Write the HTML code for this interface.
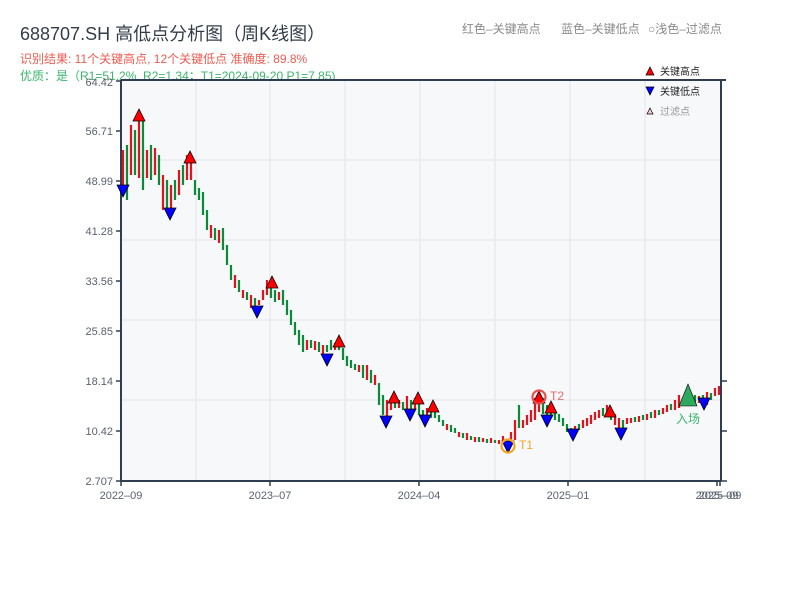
<!DOCTYPE html>
<html><head><meta charset="utf-8"><style>
body{margin:0;background:#fff;width:800px;height:600px;overflow:hidden;font-family:"Liberation Sans","Noto Sans CJK SC",sans-serif}
svg{position:absolute;left:0;top:0}
</style></head><body>
<svg width="800" height="600" xmlns="http://www.w3.org/2000/svg" font-family="Liberation Sans, Noto Sans CJK SC, sans-serif">
<text x="20" y="40" font-size="18" fill="#333d4a">688707.SH 高低点分析图（周K线图）</text>
<text x="20" y="63" font-size="12" fill="#f05b50">识别结果: 11个关键高点, 12个关键低点  准确度: 89.8%</text>
<text x="20" y="80" font-size="12" fill="#3bb56b">优质：是（R1=51.2%, R2=1.34；T1=2024-09-20 P1=7.85)</text>
<text x="462" y="33" font-size="12" fill="#8a8a8a">红色–关键高点</text>
<text x="561" y="33" font-size="12" fill="#8a8a8a">蓝色–关键低点</text>
<text x="648" y="33" font-size="12" fill="#8a8a8a">○浅色–过滤点</text>
<rect x="121" y="80" width="600" height="401" fill="#f6f8fa"/>
<g stroke="#e1e4ea" stroke-width="1">
<line x1="196" y1="80" x2="196" y2="480"/><line x1="270" y1="80" x2="270" y2="480"/><line x1="345" y1="80" x2="345" y2="480"/><line x1="420" y1="80" x2="420" y2="480"/><line x1="495" y1="80" x2="495" y2="480"/><line x1="570" y1="80" x2="570" y2="480"/><line x1="645" y1="80" x2="645" y2="480"/>
<line x1="121" y1="160" x2="721" y2="160"/><line x1="121" y1="240" x2="721" y2="240"/><line x1="121" y1="320" x2="721" y2="320"/><line x1="121" y1="400" x2="721" y2="400"/>
</g>
<path stroke="#e0141e" stroke-width="2.2" fill="none" d="M123 150V185M131 125V175M139 120V178M147 150V178M155 148V175M163 175V210M171 185V210M179 170V195M187 155V180M191 160V180M211 225V238M219 230V243M235 275V288M243 290V298M251 295V308M259 300V305M263 290V300M267 280V295M279 292V300M307 340V350M315 341V350M323 345V355M335 343V350M359 365V372M367 365V380M375 375V385M387 400V420M391 398V410M399 400V408M407 396V410M415 398V410M427 408V416M447 424V430M459 432V437M467 433V440M475 437V442M483 438V442M491 438V443M499 440V444M503 436V444M511 432V442M515 420V440M523 420V428M527 415V425M531 410V422M535 398V420M539 392V412M575 426V432M583 420V428M587 418V426M591 415V424M595 412V420M599 410V418M607 405V416M615 414V425M619 418V430M627 418V424M631 418V423M639 416V422M647 414V420M655 410V418M663 408V414M667 405V412M675 400V410M679 395V408M687 392V404M691 394V404M699 396V403M707 392V405M715 388V396M719 386V395"/>
<path stroke="#0b8a3a" stroke-width="2.2" fill="none" d="M127 145V200M135 130V175M143 120V190M151 145V180M159 155V185M167 180V212M175 180V200M183 165V185M195 180V195M199 188V200M203 192V215M207 210V230M215 228V240M223 228V250M227 245V265M231 265V280M239 280V292M247 292V300M255 298V312M271 285V298M275 290V302M283 290V305M287 300V315M291 310V325M295 322V335M299 330V345M303 335V352M311 340V348M319 342V352M327 345V352M331 340V350M339 340V350M343 348V360M347 356V366M351 360V368M355 364V370M363 365V378M371 370V383M379 383V405M383 395V415M395 400V408M403 402V410M411 400V412M419 400V415M423 410V418M431 408V418M435 410V418M439 415V422M443 420V426M451 425V432M455 428V433M463 433V438M471 436V440M479 437V442M487 439V443M495 440V443M507 440V444M519 405V428M543 398V414M547 405V415M551 408V418M555 412V420M559 414V422M563 418V426M567 424V432M571 428V436M579 424V430M603 408V416M611 410V420M623 420V428M635 417V422M643 415V420M651 412V418M659 410V415M671 404V410M683 398V405M695 395V403M703 395V402M711 393V400"/>
<g stroke="#2e3e50" stroke-width="2" fill="none">
<line x1="121" y1="80" x2="121" y2="481"/><line x1="120" y1="481" x2="721" y2="481"/><line x1="121" y1="80" x2="726" y2="80"/><line x1="721" y1="80" x2="721" y2="481"/>
</g>
<g stroke="#2e3e50" stroke-width="1.5">
<line x1="116" y1="81" x2="121" y2="81"/><line x1="116" y1="131" x2="121" y2="131"/><line x1="116" y1="181" x2="121" y2="181"/><line x1="116" y1="231" x2="121" y2="231"/><line x1="116" y1="281" x2="121" y2="281"/><line x1="116" y1="331" x2="121" y2="331"/><line x1="116" y1="381" x2="121" y2="381"/><line x1="116" y1="431" x2="121" y2="431"/><line x1="116" y1="481" x2="121" y2="481"/>
<line x1="721" y1="381" x2="727" y2="381"/><line x1="721" y1="431" x2="727" y2="431"/><line x1="721" y1="481" x2="727" y2="481"/>
<line x1="121" y1="481" x2="121" y2="486"/><line x1="270" y1="481" x2="270" y2="486"/><line x1="419" y1="481" x2="419" y2="486"/><line x1="568" y1="481" x2="568" y2="486"/><line x1="717" y1="481" x2="717" y2="486"/><line x1="720" y1="481" x2="720" y2="486"/>
</g>
<g font-size="11" fill="#5a6270" text-anchor="end">
<text x="113" y="86">64.42</text><text x="113" y="135">56.71</text><text x="113" y="185">48.99</text><text x="113" y="235">41.28</text><text x="113" y="285">33.56</text><text x="113" y="335">25.85</text><text x="113" y="385">18.14</text><text x="113" y="435">10.42</text><text x="113" y="485">2.707</text>
</g>
<g font-size="11" fill="#5a6270" text-anchor="middle">
<text x="121" y="499">2022–09</text><text x="270" y="499">2023–07</text><text x="419" y="499">2024–04</text><text x="568" y="499">2025–01</text><text x="717" y="499">2025–09</text><text x="720" y="499">2025–09</text>
</g>
<g stroke="#000" stroke-width="0.8" fill="#f00">
<polygon points="133,121 139,109 145,121"/><polygon points="184,163 190,151 196,163"/><polygon points="266,288 272,276 278,288"/><polygon points="333,347 339,335 345,347"/><polygon points="388,403 394,391 400,403"/><polygon points="412,404 418,392 424,404"/><polygon points="427,412 433,400 439,412"/><polygon points="533,403 539,391 545,403"/><polygon points="545,413 551,401 557,413"/><polygon points="604,417 610,405 616,417"/>
</g>
<g stroke="#000" stroke-width="0.8" fill="#00f">
<polygon points="117,185 123,197 129,185"/><polygon points="164,208 170,220 176,208"/><polygon points="251,306 257,318 263,306"/><polygon points="321,354 327,366 333,354"/><polygon points="380,416 386,428 392,416"/><polygon points="404,409 410,421 416,409"/><polygon points="419,415 425,427 431,415"/><polygon points="502,441 508,453 514,441"/><polygon points="541,415 547,427 553,415"/><polygon points="567,429 573,441 579,429"/><polygon points="615,428 621,440 627,428"/><polygon points="698,398 704,410 710,398"/>
</g>
<polygon points="679,406 688,384 697,406" fill="#2eaa5e" stroke="#000" stroke-width="0.6"/>
<circle cx="508" cy="446" r="6.5" fill="none" stroke="#f5a623" stroke-width="2.2"/>
<text x="519" y="449" font-size="12" fill="#f5a623">T1</text>
<circle cx="539" cy="397" r="6.5" fill="none" stroke="#e55050" stroke-width="2.2"/>
<text x="550" y="400" font-size="12" fill="#e56b6b">T2</text>
<text x="676" y="423" font-size="12" fill="#3bb56b">入场</text>
<polygon points="646,75 650,67 654,75" fill="#f00" stroke="#000" stroke-width="0.7"/>
<text x="660" y="75" font-size="10" fill="#222">关键高点</text>
<polygon points="646,87 654,87 650,95" fill="#00f" stroke="#000" stroke-width="0.7"/>
<text x="660" y="95" font-size="10" fill="#222">关键低点</text>
<polygon points="647,114 650,108 653,114" fill="#fcc" stroke="#000" stroke-width="0.7"/>
<text x="660" y="115" font-size="10" fill="#999">过滤点</text>
</svg>
</body></html>
